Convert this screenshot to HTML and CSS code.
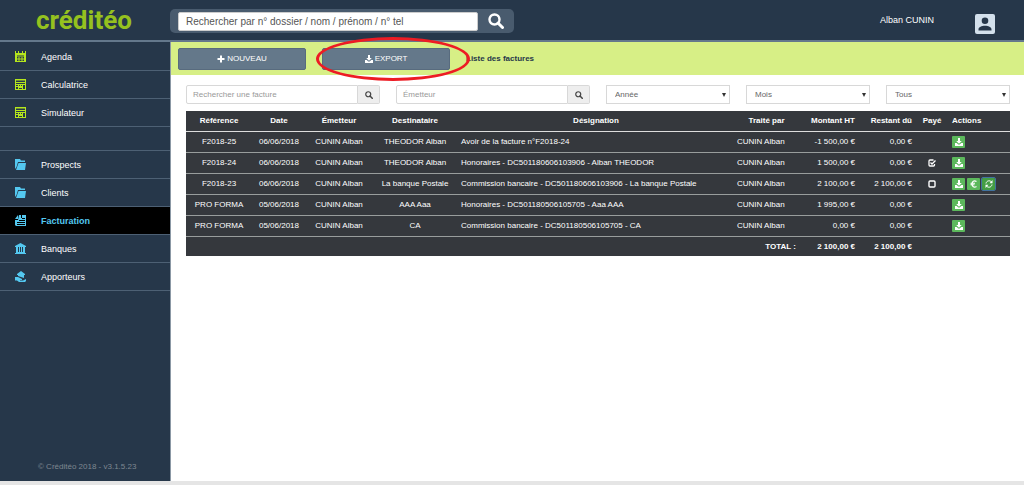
FILE: index.html
```html
<!DOCTYPE html>
<html lang="fr">
<head>
<meta charset="utf-8">
<meta name="viewport" content="width=device-width, initial-scale=1">
<title>Créditéo - Facturation</title>
<link rel="stylesheet" href="styles.css">
</head>
<body>
<svg class="sprite" aria-hidden="true">
  <symbol id="i-calendar" viewBox="0 0 11 11"><path d="M0 0h1v2h2V0h1v2h3V0h1v2h2V0h1v4H0zM0 4h11v7H0z"/><path class="cut" d="M2 4.500h7v1H2zM2 6h1.500v1.500H2zM4.500 6h2v1.500h-2zM7.500 6H9v1.500H7.500zM2 8.500h1.500V10H2zM4.500 8.500h2V10h-2zM7.500 8.500H9V10H7.500z"/></symbol>
  <symbol id="i-calc" viewBox="0 0 11 11"><path d="M0 0h11v11H0z"/><path class="cut" d="M1 1.500h9V3H1zM1 4h9v1H1zM1 6h2v1H1zM4 6h1v1H4zM6 6h1v1H6zM8 6h2v4H8zM1 8h2v2H1zM4 9h3v1H4z"/></symbol>
  <symbol id="i-folder" viewBox="0 0 11 11"><path d="M0 0h5l1 1.500h4V3H3L1.500 8 0 10zM3.500 4H11l-1 7H1z"/></symbol>
  <symbol id="i-news" viewBox="0 0 11 11"><path d="M4 0h7v11H1l-1-1V5h3zM0 4l3-4v4z"/><path class="cut" d="M6 0h1v3H6zM7 3h3v1H7zM4 5h6v1H4zM2 7h8v1H2zM2 9h8v1H2z"/></symbol>
  <symbol id="i-bank" viewBox="0 0 11 11"><path d="M5.500 0L11 3v1H0V3zM1 4h2v5H1zM4 4h1v5H4zM6 4h1v5H6zM8 4h2v5H8zM1 9h9v1H1zM0 10h11v1H0z"/></symbol>
  <symbol id="i-hand" viewBox="0 0 11 11"><path d="M6 0l4 3v1H9v3L6 6 3 5V4H2V3zM0 6h3l4 2v1H5v.5h3l3-1.500V10l-1 1H4L2 9.500H0z"/></symbol>
  <symbol id="i-search" viewBox="0 0 16 16"><circle cx="6.500" cy="6.500" r="5" fill="none" stroke="currentColor" stroke-width="2.400"/><path d="M10 10l4.500 4.500" fill="none" stroke="currentColor" stroke-width="3" stroke-linecap="round"/></symbol>
  <symbol id="i-download" viewBox="0 0 16 16"><path d="M6 0h4v6h3.500L8 11.500 2.500 6H6zM0 10h3.500l3 3h3l3-3H16v6H0z"/></symbol>
  <symbol id="i-plus" viewBox="0 0 16 16"><path d="M6 1h4v5h5v4h-5v5H6v-5H1V6h5z"/></symbol>
  <symbol id="i-euro" viewBox="0 0 16 16"><path d="M13 3C8 0 4 3 4 8s4 8 9 5M1 6.500h9M1 9.500h8" fill="none" stroke="currentColor" stroke-width="2.400"/></symbol>
  <symbol id="i-refresh" viewBox="0 0 16 16"><path d="M2 7c1-6 8-7 11-3M14 9c-1 6-8 7-11 3" fill="none" stroke="currentColor" stroke-width="2"/><path d="M15 0v6.500H9zM1 16V9.500h6z"/></symbol>
  <symbol id="i-user" viewBox="0 0 20 20"><rect width="20" height="20" rx="2"/><path class="cut" d="M10 3.500a3.300 3.300 0 1 1 0 6.600 3.300 3.300 0 0 1 0-6.600zM3.500 16.500v-1c0-5 13-5 13 0v1z"/></symbol>
</svg>

<header class="topbar">
  <a class="logo" href="#">créditéo</a>
  <form class="search">
    <input class="search-input" type="text" aria-label="Rechercher" placeholder="Rechercher par n° dossier / nom / prénom / n° tel">
    <button class="search-button" type="button" aria-label="Lancer la recherche"><svg><use href="#i-search"/></svg></button>
  </form>
  <span class="user-name">Alban CUNIN</span>
  <button class="user-button" type="button" aria-label="Mon compte"><svg><use href="#i-user"/></svg></button>
</header>

<div class="shell">
  <nav class="sidebar">
    <ul class="menu tools">
      <li><a href="#"><svg><use href="#i-calendar"/></svg>Agenda</a></li>
      <li><a href="#"><svg><use href="#i-calc"/></svg>Calculatrice</a></li>
      <li><a href="#"><svg><use href="#i-calc"/></svg>Simulateur</a></li>
    </ul>
    <ul class="menu sections">
      <li><a href="#"><svg><use href="#i-folder"/></svg>Prospects</a></li>
      <li><a href="#"><svg><use href="#i-folder"/></svg>Clients</a></li>
      <li><a class="active" href="#"><svg><use href="#i-news"/></svg>Facturation</a></li>
      <li><a href="#"><svg><use href="#i-bank"/></svg>Banques</a></li>
      <li><a href="#"><svg><use href="#i-hand"/></svg>Apporteurs</a></li>
    </ul>
    <p class="version">© Créditéo 2018 - v3.1.5.23</p>
  </nav>

  <main class="main">
    <div class="toolbar">
      <button class="tool" type="button"><svg><use href="#i-plus"/></svg>NOUVEAU</button>
      <div class="highlighted">
        <button class="tool" type="button"><svg><use href="#i-download"/></svg>EXPORT</button>
        <span class="ring"></span>
      </div>
      <h1 class="title">Liste des factures</h1>
    </div>

    <form class="filters">
      <div class="field"><input type="text" aria-label="Rechercher une facture" placeholder="Rechercher une facture"><button type="button" aria-label="Rechercher"><svg><use href="#i-search"/></svg></button></div>
      <div class="field"><input type="text" aria-label="Émetteur" placeholder="Émetteur"><button type="button" aria-label="Rechercher un émetteur"><svg><use href="#i-search"/></svg></button></div>
      <select class="choice" aria-label="Année"><option>Année</option></select>
      <select class="choice" aria-label="Mois"><option>Mois</option></select>
      <select class="choice" aria-label="Statut"><option>Tous</option></select>
    </form>

    <table class="invoices">
      <colgroup><col class="c-ref"><col class="c-date"><col class="c-from"><col class="c-to"><col><col class="c-by"><col class="c-amount"><col class="c-due"><col class="c-paid"><col class="c-actions"></colgroup>
      <thead>
        <tr><th>Référence</th><th>Date</th><th>Émetteur</th><th>Destinataire</th><th>Désignation</th><th>Traité par</th><th class="num">Montant HT</th><th class="num">Restant dû</th><th>Payé</th><th class="left">Actions</th></tr>
      </thead>
      <tbody>
        <tr><td>F2018-25</td><td>06/06/2018</td><td>CUNIN Alban</td><td>THEODOR Alban</td><td class="left">Avoir de la facture n°F2018-24</td><td class="left">CUNIN Alban</td><td class="num">-1 500,00 €</td><td class="num">0,00 €</td><td></td>
          <td><div class="actions"><button type="button" aria-label="Télécharger"><svg><use href="#i-download"/></svg></button></div></td></tr>
        <tr><td>F2018-24</td><td>06/06/2018</td><td>CUNIN Alban</td><td>THEODOR Alban</td><td class="left">Honoraires - DC501180606103906 - Alban THEODOR</td><td class="left">CUNIN Alban</td><td class="num">1 500,00 €</td><td class="num">0,00 €</td><td><input class="paid" type="checkbox" aria-label="Payé" checked></td>
          <td><div class="actions"><button type="button" aria-label="Télécharger"><svg><use href="#i-download"/></svg></button></div></td></tr>
        <tr><td>F2018-23</td><td>06/06/2018</td><td>CUNIN Alban</td><td>La banque Postale</td><td class="left">Commission bancaire - DC501180606103906 - La banque Postale</td><td class="left">CUNIN Alban</td><td class="num">2 100,00 €</td><td class="num">2 100,00 €</td><td><input class="paid" type="checkbox" aria-label="Payé"></td>
          <td><div class="actions"><button type="button" aria-label="Télécharger"><svg><use href="#i-download"/></svg></button><button type="button" aria-label="Encaisser"><svg><use href="#i-euro"/></svg></button><button class="focused" type="button" aria-label="Actualiser"><svg><use href="#i-refresh"/></svg></button></div></td></tr>
        <tr><td>PRO FORMA</td><td>05/06/2018</td><td>CUNIN Alban</td><td>AAA Aaa</td><td class="left">Honoraires - DC501180506105705 - Aaa AAA</td><td class="left">CUNIN Alban</td><td class="num">1 995,00 €</td><td class="num">0,00 €</td><td></td>
          <td><div class="actions"><button type="button" aria-label="Télécharger"><svg><use href="#i-download"/></svg></button></div></td></tr>
        <tr><td>PRO FORMA</td><td>05/06/2018</td><td>CUNIN Alban</td><td>CA</td><td class="left">Commission bancaire - DC501180506105705 - CA</td><td class="left">CUNIN Alban</td><td class="num">0,00 €</td><td class="num">0,00 €</td><td></td>
          <td><div class="actions"><button type="button" aria-label="Télécharger"><svg><use href="#i-download"/></svg></button></div></td></tr>
      </tbody>
      <tfoot>
        <tr><td class="num" colspan="6">TOTAL :</td><td class="num">2 100,00 €</td><td class="num">2 100,00 €</td><td></td><td></td></tr>
      </tfoot>
    </table>
  </main>
</div>
<div class="statusbar"></div>
</body>
</html>
```
FILE: styles.css
```css
* { box-sizing: border-box; }

body {
  margin: 0;
  min-height: 100vh;
  display: flex;
  flex-direction: column;
  background: #fff;
  color: #fff;
  font-family: "Liberation Sans", Arial, sans-serif;
  font-size: 8px;
}

button, input, select { font: inherit; margin: 0; }
button { border: 0; padding: 0; cursor: pointer; color: inherit; }
svg { display: block; fill: currentColor; flex: none; }
.sprite { position: absolute; width: 0; height: 0; }
.cut { fill: #26374a; }

/* Top bar */
.topbar {
  display: flex;
  align-items: center;
  height: 42px;
  padding-right: 29px;
  background: #26374a;
  border-bottom: 2px solid #64788c;
}
.logo {
  width: 170px;
  padding-left: 36px;
  color: #95c11f;
  font-family: Roboto, sans-serif;
  font-size: 26px;
  font-weight: 700;
  line-height: 40px;
  text-decoration: none;
}
.search {
  display: flex;
  align-items: center;
  width: 344px;
  height: 24px;
  margin-top: 2px;
  padding-left: 8px;
  border-radius: 5px;
  background: #495b6e;
}
.search-input {
  width: 300px;
  height: 19px;
  padding: 0 7px;
  border: 1px solid #ccc;
  border-radius: 2px;
  background: #fff;
  font-size: 10px;
}
.search-input::placeholder { color: #555; opacity: 1; }
.search-button { flex: 1; background: none; }
.search-button svg { width: 16px; height: 16px; margin: 0 auto; }
.user-name { margin-left: auto; font-size: 9px; }
.user-button { margin: 8px 0 0 41px; background: none; color: #d3e0ec; }
.user-button svg { width: 20px; height: 20px; }

/* Side menu */
.shell { flex: 1; display: flex; }
.sidebar {
  display: flex;
  flex-direction: column;
  width: 171px;
  flex: none;
  background: #26374a;
  border-right: 1px solid #8b98a5;
}
.menu { margin: 0; padding: 0; list-style: none; }
.menu a {
  display: flex;
  align-items: center;
  gap: 15px;
  height: 28px;
  padding-left: 15px;
  border-bottom: 1px solid #4d6074;
  color: #fff;
  font-size: 9px;
  text-decoration: none;
}
.menu svg { width: 11px; height: 11px; }
.tools { padding-top: 1px; }
.tools svg { color: #b5e61d; }
.sections { margin-top: 23px; border-top: 1px solid #4d6074; }
.sections svg { color: #54c8f0; }
.menu .active { background: #000; color: #54c8f0; font-weight: 700; }
.active svg { --cut: #000; }
.version { margin: auto 0 9px; padding-left: 38px; color: #7e8791; line-height: 10px; }

/* Green toolbar */
.main { flex: 1; min-width: 0; }
.toolbar {
  display: flex;
  align-items: center;
  gap: 16px;
  height: 33px;
  padding-left: 7px;
  background: #d7ef86;
}
.tool {
  display: flex;
  align-items: center;
  justify-content: center;
  gap: 2px;
  width: 128px;
  height: 22px;
  border: 1px solid #586b7e;
  border-radius: 2px;
  background: #64788a;
}
.tool svg { width: 8px; height: 8px; }
.highlighted { position: relative; }
.ring {
  position: absolute;
  inset: -11px -20px -11px -6px;
  border: 3px solid #ed1c24;
  border-radius: 50%;
  pointer-events: none;
}
.title { margin: 0; color: #26374a; font-size: 8px; }

/* Filters */
.filters { display: flex; gap: 16px; padding: 10px 14px 7px 15px; }
.field { display: flex; flex: 1 1 194px; height: 19px; }
.field input {
  flex: 1;
  min-width: 0;
  padding: 0 6px;
  border: 1px solid #d8d8d8;
  border-radius: 2px 0 0 2px;
}
.field input::placeholder { color: #999; opacity: 1; }
.field button {
  width: 22px;
  border: 1px solid #d8d8d8;
  border-left: 0;
  border-radius: 0 2px 2px 0;
  background: #eee;
  color: #444;
}
.field svg { width: 8px; height: 8px; margin: 0 auto; }
.choice {
  flex: 1 1 124px;
  min-width: 0;
  height: 19px;
  padding: 0 8px;
  border: 1px solid #d8d8d8;
  border-radius: 0;
  appearance: none;
  background: #fff url("data:image/svg+xml,%3Csvg xmlns='http://www.w3.org/2000/svg' width='4' height='4'%3E%3Cpath d='M0 0h4L2 4z' fill='%23333'/%3E%3C/svg%3E") no-repeat right 3px center;
  color: #666;
}

/* Invoice table */
.invoices {
  width: calc(100% - 29px);
  margin: 0 14px 0 15px;
  table-layout: fixed;
  border-collapse: collapse;
  background: #35383d;
}
.invoices th, .invoices td {
  height: 21px;
  padding: 0 3px;
  border-bottom: 1px solid #999d9d;
  text-align: center;
  white-space: nowrap;
}
.invoices th { height: 20px; border-color: #ddd; }
.invoices .left { text-align: left; }
.invoices .num { text-align: right; }
.invoices tfoot td { height: 20px; border: 0; font-weight: 700; }
.c-ref, .c-from { width: 66px; }
.c-date { width: 54px; }
.c-to { width: 86px; }
.c-by { width: 65px; }
.c-amount { width: 59px; }
.c-due { width: 57px; }
.c-paid { width: 34px; }
.c-actions { width: 61px; }

.actions { display: flex; gap: 2px; }
.actions button {
  display: grid;
  place-items: center;
  width: 13px;
  height: 12px;
  border-radius: 1px;
  background: #5cb85c;
}
.actions svg { width: 8px; height: 8px; }
.actions .focused { background: #449d44; outline: 1px solid #41729f; }
.paid {
  display: block;
  width: 8px;
  height: 8px;
  margin: 0 auto;
  appearance: none;
  background: url("data:image/svg+xml,%3Csvg xmlns='http://www.w3.org/2000/svg' viewBox='0 0 8 8'%3E%3Crect x='1' y='1' width='6' height='6' rx='1' fill='none' stroke='white' stroke-width='1.400'/%3E%3C/svg%3E") center / contain no-repeat;
}
.paid:checked {
  background-image: url("data:image/svg+xml,%3Csvg xmlns='http://www.w3.org/2000/svg' viewBox='0 0 8 8'%3E%3Cpath d='M5.500 1H2Q1 1 1 2v4q0 1 1 1h3.500q1 0 1-1V5M2.500 3.500l1.500 1.500L7.500 1.500' fill='none' stroke='white' stroke-width='1.300'/%3E%3C/svg%3E");
}
.cut { fill: var(--cut, #26374a); }

.statusbar { height: 4px; background: #e5e5e5; }
```
